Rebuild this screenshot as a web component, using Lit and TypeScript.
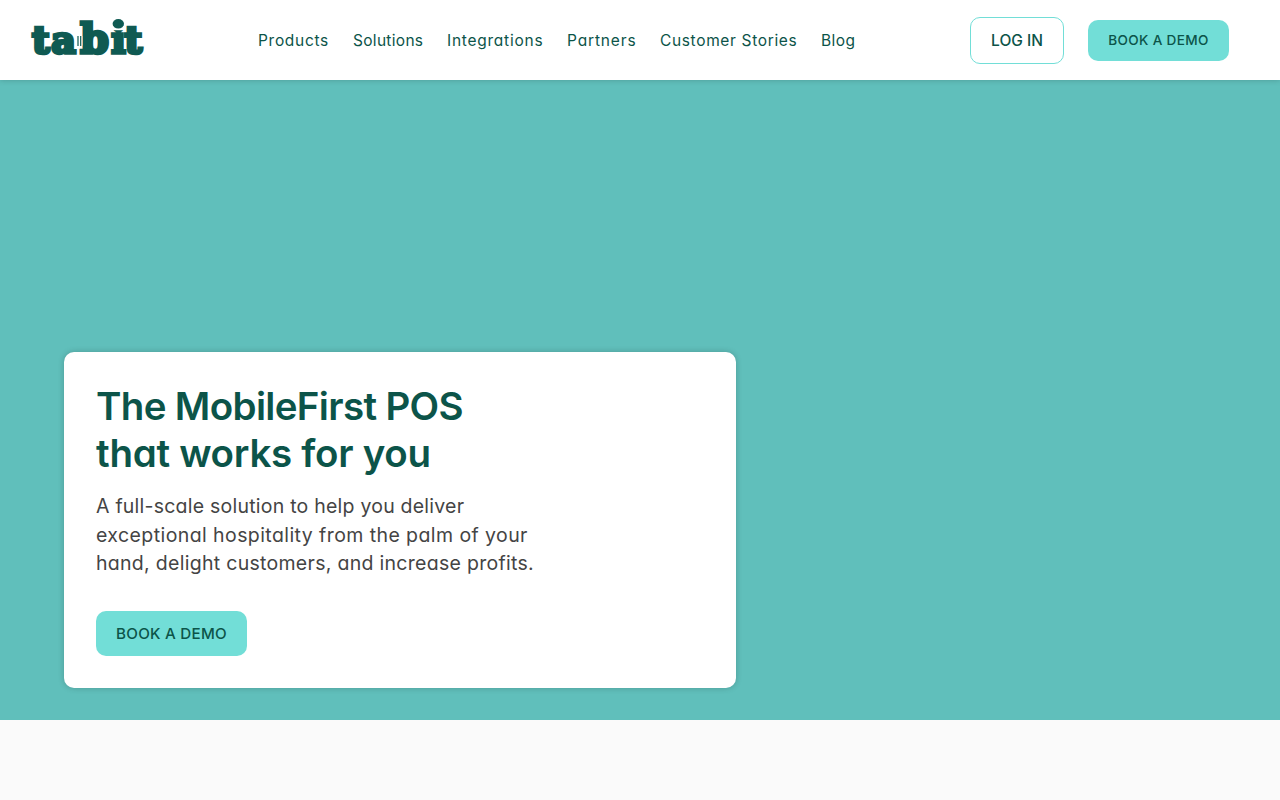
import { LitElement, html, css } from 'lit';
import { customElement } from 'lit/decorators.js';

interface NavItem {
  label: string;
  width: number;
  spacing: number;
}

const NAV_ITEMS: NavItem[] = [
  { label: 'Products', width: 71, spacing: 0.7 },
  { label: 'Solutions', width: 70, spacing: 0.3 },
  { label: 'Integrations', width: 96, spacing: 0.75 },
  { label: 'Partners', width: 69, spacing: 0.85 },
  { label: 'Customer Stories', width: 137, spacing: 0.65 },
  { label: 'Blog', width: 34, spacing: 0.4 },
];

@customElement('site-logo')
export class SiteLogo extends LitElement {
  static styles = css`
    :host {
      display: block;
      width: 112px;
      height: 40px;
    }

    svg {
      display: block;
      overflow: visible;
    }

    text {
      font: bold 38px 'DejaVu Serif', serif;
      fill: #0f5a52;
      stroke: #0f5a52;
      stroke-width: 3.4;
    }

    .tall {
      font-size: 41px;
    }

    .dot {
      fill: #0f5a52;
    }

    .notch {
      fill: #fff;
    }

    .tines {
      fill: none;
      stroke: #0f5a52;
      stroke-width: 1.2;
    }
  `;

  render() {
    return html`
      <svg width="112" height="40" viewBox="0 0 112 40" role="img" aria-label="tabit">
        <text x="0 19.3 48.3 79.3 92.6" y="33">ta<tspan class="tall">b</tspan>it</text>
        <path class="notch" d="M80 6h12.8v4.2h-12.8z" />
        <ellipse class="dot" cx="86.3" cy="3.8" rx="5.7" ry="4.8" />
        <!-- fork tines between the a and the b -->
        <path class="notch" d="M44.3 16h6v9.5h-6z" />
        <path class="tines" d="M46 16v10M48.7 16v10" />
      </svg>
    `;
  }
}

@customElement('app-root')
export class AppRoot extends LitElement {
  static styles = css`
    :host {
      display: block;
      min-height: 800px;
      background: #fafafa;
      color: #0c5449;
      font-family: Inter, sans-serif;
      font-feature-settings: 'cv11';
    }

    a {
      color: inherit;
      text-decoration: none;
      white-space: nowrap;
    }

    header {
      display: flex;
      align-items: center;
      box-sizing: border-box;
      height: 80px;
      padding: 0 51px 0 32px;
      background: #fff;
      box-shadow: 0 0 6px rgba(0, 0, 0, 0.2);
      position: relative;
      z-index: 1;
    }

    nav {
      display: flex;
      gap: 24px;
      margin-left: 114px;
      padding-top: 2px;
      font-size: 15.5px;
      line-height: 24px;
    }

    .actions {
      display: flex;
      align-items: center;
      gap: 24px;
      margin-left: auto;
    }

    .button {
      display: flex;
      align-items: center;
      justify-content: center;
      box-sizing: border-box;
      border-radius: 10px;
      background: #72ded7;
      font-weight: 500;
    }

    .login {
      width: 94px;
      height: 47px;
      border: 1px solid #72ded7;
      background: #fff;
      font-size: 15.5px;
    }

    .demo {
      width: 141px;
      height: 41px;
      font-size: 13.6px;
      letter-spacing: 0.35px;
    }

    .hero {
      display: flex;
      align-items: flex-end;
      box-sizing: border-box;
      height: 640px;
      padding: 32px 64px;
      background: #60bfbb;
    }

    .card {
      box-sizing: border-box;
      width: 672px;
      height: 336px;
      padding: 31px 32px 32px;
      border-radius: 10px;
      background: #fff;
      box-shadow: 0 0 6px rgba(0, 0, 0, 0.2);
    }

    h1 {
      margin: 0 0 15px;
      font-size: 38.5px;
      font-weight: 600;
      line-height: 47px;
      white-space: nowrap;
    }

    p {
      margin: 0 0 33px;
      color: #444;
      font-size: 19.5px;
      line-height: 28.6px;
      white-space: nowrap;
    }

    h1 span,
    p span {
      display: block;
    }

    .title-first {
      letter-spacing: -0.65px;
    }

    .title-second {
      letter-spacing: -0.28px;
    }

    .copy-first {
      letter-spacing: 0.23px;
    }

    .copy-second {
      letter-spacing: 0.42px;
    }

    .copy-third {
      letter-spacing: 0.29px;
    }

    .card .button {
      width: 151px;
      height: 45px;
      font-size: 15.2px;
      letter-spacing: 0.25px;
    }
  `;

  render() {
    return html`
      <header>
        <site-logo></site-logo>
        <nav>
          ${NAV_ITEMS.map(
            (item) => html`
              <a href="#" style="width: ${item.width}px; letter-spacing: ${item.spacing}px">${item.label}</a>
            `
          )}
        </nav>
        <div class="actions">
          <a class="button login" href="#">LOG IN</a>
          <a class="button demo" href="#">BOOK A DEMO</a>
        </div>
      </header>
      <section class="hero">
        <div class="card">
          <h1>
            <span class="title-first">The MobileFirst POS</span>
            <span class="title-second">that works for you</span>
          </h1>
          <p>
            <span class="copy-first">A full-scale solution to help you deliver</span>
            <span class="copy-second">exceptional hospitality from the palm of your</span>
            <span class="copy-third">hand, delight customers, and increase profits.</span>
          </p>
          <a class="button" href="#">BOOK A DEMO</a>
        </div>
      </section>
    `;
  }
}
